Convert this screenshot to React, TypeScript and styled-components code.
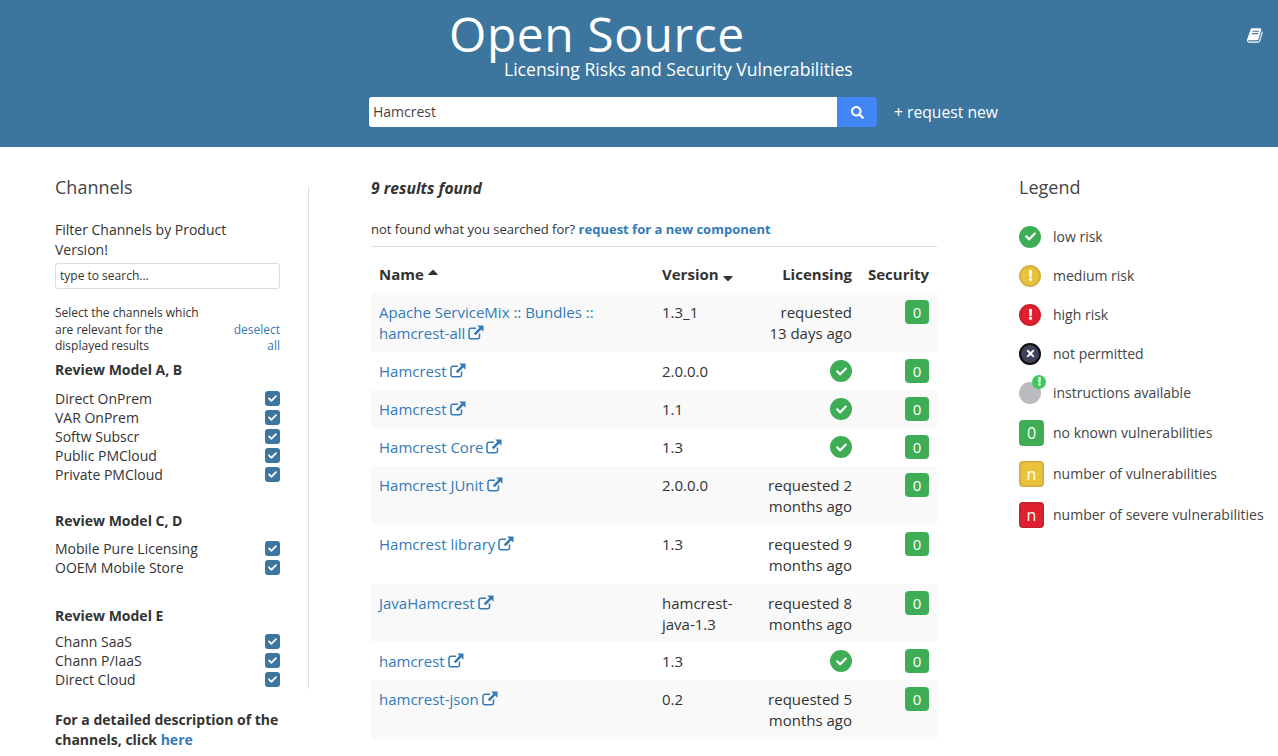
import React from 'react';
import styled, { createGlobalStyle } from 'styled-components';
import { FaCheck, FaExclamation, FaTimes, FaSearch, FaCaretUp, FaCaretDown } from 'react-icons/fa';

const GlobalStyle = createGlobalStyle`
  html, body {
    margin: 0;
    padding: 0;
    background: #fff;
    color: #333;
    font-family: "Open Sans", "Liberation Sans", sans-serif;
    font-size: 14px;
  }
  * { box-sizing: border-box; }
`;

const Header = styled.header`
  position: relative;
  height: 147px;
  background: #3c769e;
  color: #fff;
  padding-top: 5px;
`;

const Title = styled.h1`
  margin: 0 0 0 449px;
  font-size: 48px;
  font-weight: 400;
  line-height: 58px;
  letter-spacing: 0.55px;
`;

const Subtitle = styled.div`
  margin: -5px 0 0 504px;
  font-size: 17.6px;
  line-height: 22px;
`;

const SearchRow = styled.div`
  display: flex;
  align-items: center;
  margin: 17px 0 0 369px;
`;

const SearchInput = styled.div`
  width: 468px;
  height: 30px;
  background: #fff;
  border-radius: 3px 0 0 3px;
  color: #444;
  font-size: 14px;
  line-height: 30px;
  padding-left: 4px;
`;

const SearchButton = styled.div`
  width: 40px;
  height: 30px;
  background: #4285f4;
  border-radius: 0 3px 3px 0;
  display: flex;
  align-items: center;
  justify-content: center;
  font-size: 13px;
`;

const RequestNew = styled.span`
  margin-left: 17px;
  font-size: 15.7px;
`;

const DocsIcon = styled.svg`
  position: absolute;
  top: 27px;
  right: 14px;
  width: 17px;
  height: 17px;
`;

const Content = styled.div`
  display: flex;
  align-items: flex-start;
  padding: 28px 0 0 55px;
`;

const LeftColumn = styled.aside`
  width: 254px;
  flex: none;
`;

const SideTitle = styled.h2`
  margin: 0;
  font-size: 18px;
  font-weight: 400;
  line-height: 24px;
  color: #444;
`;

const Channels = styled.div`
  border-right: 1px solid #ddd;
  padding: 12px 28px 0 0;
  height: 502px;
  margin-top: -12px;
`;

const FilterText = styled.p`
  margin: 21px 0 3px;
  line-height: 20px;
`;

const FilterInput = styled.div`
  height: 26px;
  border: 1px solid #ddd;
  border-radius: 3px;
  font-size: 12px;
  line-height: 24px;
  padding-left: 4px;
`;

const SelectRow = styled.div`
  display: flex;
  justify-content: space-between;
  align-items: flex-end;
  margin-top: 16px;
  font-size: 12px;
  line-height: 16.7px;
`;

const SelectText = styled.div`
  width: 160px;
`;

const Deselect = styled.a`
  width: 50px;
  text-align: right;
  color: #337ab7;
`;

const GroupTitle = styled.div<{ $top: number; $gap: number }>`
  margin-top: ${p => p.$top}px;
  margin-bottom: ${p => p.$gap}px;
  font-weight: 700;
  line-height: 20px;
`;

const ChannelRow = styled.div`
  display: flex;
  justify-content: space-between;
  align-items: center;
  height: 19px;
`;

const Checkbox = styled.span`
  width: 15px;
  height: 15px;
  border-radius: 3px;
  background: #3c769e;
  color: #fff;
  display: flex;
  align-items: center;
  justify-content: center;
  font-size: 9px;
`;

const Detail = styled.p`
  margin: 21px 0 0;
  width: 240px;
  font-weight: 700;
  line-height: 20px;
`;

const Link = styled.a`
  color: #337ab7;
`;

const Main = styled.main`
  width: 566px;
  margin-left: 62px;
  flex: none;
`;

const ResultCount = styled.div`
  font-size: 15.7px;
  font-weight: 700;
  font-style: italic;
  line-height: 24px;
  margin-top: 1px;
`;

const NotFound = styled.div`
  margin-top: 19px;
  padding-bottom: 7px;
  border-bottom: 1px solid #ddd;
  font-size: 13px;
  line-height: 20px;
`;

const BoldLink = styled(Link)`
  font-weight: 700;
`;

const Table = styled.table`
  width: 566px;
  table-layout: fixed;
  border-collapse: collapse;
  font-size: 15px;
  line-height: 21px;
`;

const Col = styled.col<{ $w: number }>`
  width: ${p => p.$w}px;
`;

const Th = styled.th<{ $right?: boolean }>`
  height: 46px;
  padding: 8px;
  font-weight: 700;
  vertical-align: bottom;
  text-align: ${p => (p.$right ? 'right' : 'left')};
  white-space: nowrap;
`;

const Tr = styled.tr`
  &:nth-child(odd) { background: #f9f9f9; }
`;

const Td = styled.td<{ $right?: boolean; $tight?: boolean }>`
  height: 38px;
  padding: 9px 8px ${p => (p.$tight ? 7 : 8)}px;
  vertical-align: top;
  text-align: ${p => (p.$right ? 'right' : 'left')};
`;

const Caret = styled.span<{ $up?: boolean }>`
  font-size: 16px;
  margin-left: 1px;
  svg {
    margin: -8px 0;
    vertical-align: ${p => (p.$up ? '8px' : '2px')};
  }
`;

const External = styled.svg`
  width: 16px;
  height: 15px;
  margin-left: 3px;
  vertical-align: -1px;
`;

const tones = {
  green: { bg: '#3fad56', border: '#3fad56' },
  yellow: { bg: '#e9c43a', border: '#d9ae45' },
  red: { bg: '#e21f2f', border: '#c9202f' },
  black: { bg: '#3f4258', border: '#0c0d14' },
  grey: { bg: '#bcbcc0', border: '#bcbcc0' },
};
type Tone = keyof typeof tones;

const Circle = styled.span<{ $tone: Tone }>`
  position: relative;
  display: inline-flex;
  align-items: center;
  justify-content: center;
  width: 22px;
  height: 22px;
  border-radius: 50%;
  border: 2px solid ${p => tones[p.$tone].border};
  background: ${p => tones[p.$tone].bg};
  color: #fff;
  font-size: 11px;
  vertical-align: top;
`;

const RiskCircle = styled(Circle)`
  margin-top: -1px;
`;

const Dot = styled.span`
  position: absolute;
  top: -9px;
  right: -7px;
  width: 14px;
  height: 14px;
  border-radius: 50%;
  background: #3ec85c;
  display: flex;
  align-items: center;
  justify-content: center;
  font-size: 9px;
`;

const Badge = styled.span<{ $tone: Tone }>`
  display: inline-block;
  width: 24px;
  height: 24px;
  margin: -2px 0 -1px;
  border-radius: 4px;
  background: ${p => tones[p.$tone].bg};
  color: #fff;
  text-align: center;
  font-size: 15px;
  line-height: 24px;
  vertical-align: top;
`;

const LegendBadge = styled(Badge)`
  width: 25px;
  height: 26px;
  margin: 0;
  line-height: 22px;
  border: 2px solid ${p => tones[p.$tone].border};
  font-size: 16px;
`;

const Legend = styled.aside`
  margin-left: 82px;
  flex: none;
  width: 259px;
`;

const LegendTitle = styled(SideTitle)`
  margin: 0 0 18px;
`;

const LegendRow = styled.div<{ $h: number }>`
  display: flex;
  align-items: center;
  height: ${p => p.$h}px;
  color: #444;
`;

const LegendIcon = styled.span`
  width: 34px;
  flex: none;
  display: flex;
`;

const ExternalIcon = () => (
  <External viewBox="0 0 16 15" fill="none" stroke="currentColor">
    <path d="M11.5 8.5v3.2a2 2 0 0 1-2 2H3a2 2 0 0 1-2-2V5.2a2 2 0 0 1 2-2h5" strokeWidth="1.5" />
    <path d="M9.2 0.5H15.5V6.8L13.3 4.6 7.6 10.2 5.8 8.4 11.4 2.8z" fill="currentColor" stroke="none" />
  </External>
);

const BookIcon = () => (
  <DocsIcon viewBox="0 0 1792 1792" fill="currentColor">
    <path d="M1639 478q40 57 18 129l-275 906q-19 64-76.5 107.5t-122.5 43.5h-923q-77 0-148.5-53.5t-99.5-131.5q-24-67-2-127 0-4 3-27t4-37q1-8-3-21.5t-3-19.5q2-11 8-21t16.5-23.5 16.5-23.5q23-38 45-91.5t30-91.5q3-10 .5-30t-.5-28q3-11 17-28t17-23q21-36 42-92t25-90q1-9-2.5-32t.5-28q4-13 22-30.5t22-22.5q19-26 42.5-84.5t27.5-96.5q1-8-3-25.5t-2-26.5q2-8 9-18t18-23 17-21q8-12 16.5-30.5t15-35 16-36 19.5-32 26.5-23.5 36-11.5 47.5 5.5l-1 3q38-9 51-9h761q74 0 114 56t18 130l-274 906q-36 119-71.5 153.5t-128.5 34.5h-869q-27 0-38 15-11 16-1 43 24 70 144 70h923q29 0 56-15.5t35-41.5l300-987q7-22 5-57 38 15 59 43zm-1064 2q-4 13 2 22.5t20 9.5h608q13 0 25.5-9.5t16.5-22.5l21-64q4-13-2-22.5t-20-9.5h-608q-13 0-25.5 9.5t-16.5 22.5zm-83 256q-4 13 2 22.5t20 9.5h608q13 0 25.5-9.5t16.5-22.5l21-64q4-13-2-22.5t-20-9.5h-608q-13 0-25.5 9.5t-16.5 22.5z" />
  </DocsIcon>
);

type Result = { name: string; version: string; licensing?: string; tight?: boolean };

const results: Result[] = [
  { name: 'Apache ServiceMix :: Bundles :: hamcrest-all', version: '1.3_1', licensing: 'requested 13 days ago' },
  { name: 'Hamcrest', version: '2.0.0.0' },
  { name: 'Hamcrest', version: '1.1' },
  { name: 'Hamcrest Core', version: '1.3' },
  { name: 'Hamcrest JUnit', version: '2.0.0.0', licensing: 'requested 2 months ago' },
  { name: 'Hamcrest library', version: '1.3', licensing: 'requested 9 months ago' },
  { name: 'JavaHamcrest', version: 'hamcrest-java-1.3', licensing: 'requested 8 months ago', tight: true },
  { name: 'hamcrest', version: '1.3' },
  { name: 'hamcrest-json', version: '0.2', licensing: 'requested 5 months ago' },
];

const groups = [
  { title: 'Review Model A, B', top: 5, gap: 9, items: ['Direct OnPrem', 'VAR OnPrem', 'Softw Subscr', 'Public PMCloud', 'Private PMCloud'] },
  { title: 'Review Model C, D', top: 27, gap: 8, items: ['Mobile Pure Licensing', 'OOEM Mobile Store'] },
  { title: 'Review Model E', top: 29, gap: 6, items: ['Chann SaaS', 'Chann P/IaaS', 'Direct Cloud'] },
];

const App = () => {
  return (
    <>
      <GlobalStyle />
      <Header>
        <Title>Open Source</Title>
        <Subtitle>Licensing Risks and Security Vulnerabilities</Subtitle>
        <SearchRow>
          <SearchInput>Hamcrest</SearchInput>
          <SearchButton>
            <FaSearch />
          </SearchButton>
          <RequestNew>+ request new</RequestNew>
        </SearchRow>
        <BookIcon />
      </Header>
      <Content>
        <LeftColumn>
          <SideTitle>Channels</SideTitle>
          <Channels>
            <FilterText>Filter Channels by Product Version!</FilterText>
            <FilterInput>type to search...</FilterInput>
            <SelectRow>
              <SelectText>Select the channels which are relevant for the displayed results</SelectText>
              <Deselect>deselect all</Deselect>
            </SelectRow>
            {groups.map(g => (
              <div key={g.title}>
                <GroupTitle $top={g.top} $gap={g.gap}>{g.title}</GroupTitle>
                {g.items.map(item => (
                  <ChannelRow key={item}>
                    {item}
                    <Checkbox>
                      <FaCheck />
                    </Checkbox>
                  </ChannelRow>
                ))}
              </div>
            ))}
          </Channels>
          <Detail>
            For a detailed description of the channels, click <Link>here</Link>
          </Detail>
        </LeftColumn>
        <Main>
          <ResultCount>9 results found</ResultCount>
          <NotFound>
            not found what you searched for? <BoldLink>request for a new component</BoldLink>
          </NotFound>
          <Table>
            <colgroup>
              <Col $w={283} />
              <Col $w={106} />
              <Col $w={100} />
              <Col $w={77} />
            </colgroup>
            <thead>
              <tr>
                <Th>
                  Name
                  <Caret $up>
                    <FaCaretUp />
                  </Caret>
                </Th>
                <Th>
                  Version
                  <Caret>
                    <FaCaretDown />
                  </Caret>
                </Th>
                <Th $right>Licensing</Th>
                <Th $right>Security</Th>
              </tr>
            </thead>
            <tbody>
              {results.map((r, i) => (
                <Tr key={i}>
                  <Td $tight={r.tight}>
                    <Link>
                      {r.name}
                      <ExternalIcon />
                    </Link>
                  </Td>
                  <Td $tight={r.tight}>{r.version}</Td>
                  <Td $right $tight={r.tight}>
                    {r.licensing ?? (
                      <RiskCircle $tone="green">
                        <FaCheck />
                      </RiskCircle>
                    )}
                  </Td>
                  <Td $right $tight={r.tight}>
                    <Badge $tone="green">0</Badge>
                  </Td>
                </Tr>
              ))}
            </tbody>
          </Table>
        </Main>
        <Legend>
          <LegendTitle>Legend</LegendTitle>
          <LegendRow $h={39}>
            <LegendIcon>
              <Circle $tone="green"><FaCheck /></Circle>
            </LegendIcon>
            low risk
          </LegendRow>
          <LegendRow $h={39}>
            <LegendIcon>
              <Circle $tone="yellow"><FaExclamation /></Circle>
            </LegendIcon>
            medium risk
          </LegendRow>
          <LegendRow $h={39}>
            <LegendIcon>
              <Circle $tone="red"><FaExclamation /></Circle>
            </LegendIcon>
            high risk
          </LegendRow>
          <LegendRow $h={39}>
            <LegendIcon>
              <Circle $tone="black"><FaTimes /></Circle>
            </LegendIcon>
            not permitted
          </LegendRow>
          <LegendRow $h={39}>
            <LegendIcon>
              <Circle $tone="grey">
                <Dot><FaExclamation /></Dot>
              </Circle>
            </LegendIcon>
            instructions available
          </LegendRow>
          <LegendRow $h={41}>
            <LegendIcon><LegendBadge $tone="green">0</LegendBadge></LegendIcon>
            no known vulnerabilities
          </LegendRow>
          <LegendRow $h={41}>
            <LegendIcon><LegendBadge $tone="yellow">n</LegendBadge></LegendIcon>
            number of vulnerabilities
          </LegendRow>
          <LegendRow $h={41}>
            <LegendIcon><LegendBadge $tone="red">n</LegendBadge></LegendIcon>
            number of severe vulnerabilities
          </LegendRow>
        </Legend>
      </Content>
    </>
  );
};

export default App;
